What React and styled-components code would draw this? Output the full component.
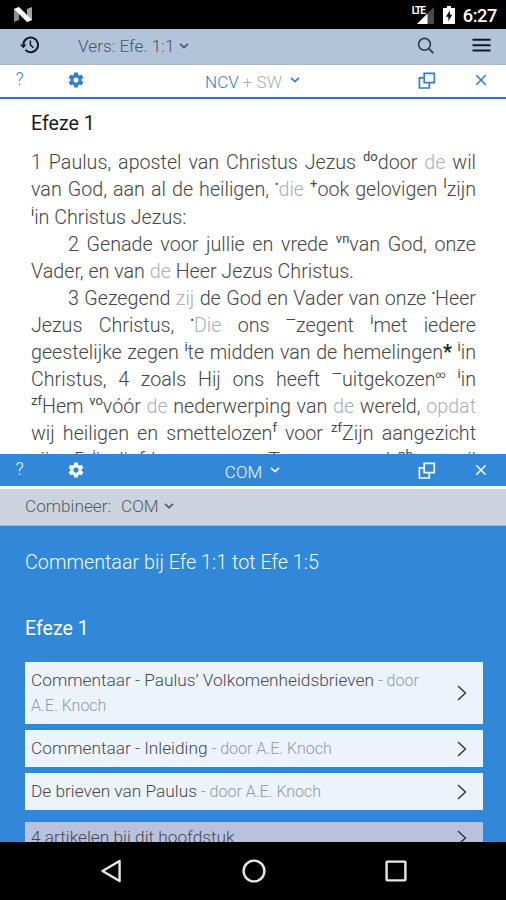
import * as React from 'react';
import styled, { createGlobalStyle, css } from 'styled-components';

const GlobalStyle = createGlobalStyle`
  * {
    box-sizing: border-box;
  }
  body {
    margin: 0;
    background: #000;
    font-family: Roboto, 'Open Sans', sans-serif;
    font-weight: 300;
  }
`;

// Icons
const NougatLogo = () => (
  <svg width='20' height='16' viewBox='0 0 20 16'>
    <path d='M1 2L6 0V13L1 15Z' fill='#8d8d8d' />
    <path d='M14 2L19 0V13L14 15Z' fill='#a5a5a5' />
    <path d='M1 2L6 0L19 13L14 15Z' fill='#fff' />
  </svg>
);

const SignalIcon = () => (
  <svg width='17' height='17' viewBox='0 0 17 17'>
    <path d='M17 0V17H0Z' fill='#4a4a4a' />
    <path d='M10.5 6.5V17H0Z' fill='#fff' />
  </svg>
);

const BatteryIcon = () => (
  <svg width='12' height='18' viewBox='0 0 12 18'>
    <path d='M4 0H8V2H12V18H0V2H4Z' fill='#fff' />
    <path d='M6.8 4.5L3 10.8H5.4V15.2L9.2 8.8H6.8Z' fill='#000' />
  </svg>
);

const HistoryIcon = () => (
  <svg width='20' height='18' viewBox='0 0 20 18' fill='none' stroke='#0c1a2b'>
    <path d='M3.4 8.6A7.3 7.3 0 1 1 5.4 13.9' strokeWidth='2' />
    <path d='M0 8.4H6.6L3.3 12.2Z' fill='#0c1a2b' stroke='none' />
    <path d='M10.4 4.6V9L13.4 11.6' strokeWidth='1.5' />
  </svg>
);

const SearchIcon = () => (
  <svg width='18' height='18' viewBox='0 0 18 18' fill='none' stroke='#2b3b4f'>
    <circle cx='7.5' cy='8.3' r='5.9' strokeWidth='1.6' />
    <path d='M11.8 12.6L16.3 17.1' strokeWidth='1.8' />
  </svg>
);

const MenuIcon = () => (
  <svg width='19' height='14' viewBox='0 0 19 14' stroke='#0c1a2b' strokeWidth='2'>
    <path d='M0.5 1.8H18.5M0.5 7.2H18.5M0.5 12.4H18.5' />
  </svg>
);

const GearIcon = () => (
  <svg width='18' height='18' viewBox='0 0 24 24' fill='currentColor'>
    <path d='M19.43 12.98c.04-.32.07-.64.07-.98s-.03-.66-.07-.98l2.11-1.65c.19-.15.24-.42.12-.64l-2-3.46c-.12-.22-.39-.3-.61-.22l-2.49 1c-.52-.4-1.08-.73-1.69-.98l-.38-2.65C14.46 2.18 14.25 2 14 2h-4c-.25 0-.46.18-.49.42l-.38 2.65c-.61.25-1.17.59-1.69.98l-2.49-1c-.23-.09-.49 0-.61.22l-2 3.46c-.13.22-.07.49.12.64l2.11 1.65c-.04.32-.07.65-.07.98s.03.66.07.98l-2.11 1.65c-.19.15-.24.42-.12.64l2 3.46c.12.22.39.3.61.22l2.49-1c.52.4 1.08.73 1.69.98l.38 2.65c.03.24.24.42.49.42h4c.25 0 .46-.18.49-.42l.38-2.65c.61-.25 1.17-.59 1.69-.98l2.49 1c.23.09.49 0 .61-.22l2-3.46c.12-.22.07-.49-.12-.64l-2.11-1.65zM12 15.5c-1.93 0-3.5-1.57-3.5-3.5s1.57-3.5 3.5-3.5 3.5 1.57 3.5 3.5-1.57 3.5-3.5 3.5z' />
  </svg>
);

const WindowsIcon = () => (
  <svg width='18' height='17' viewBox='0 0 18 17' fill='none' stroke='currentColor' strokeWidth='1.7'>
    <path d='M6.2 1.4H16.3V10.6H6.2Z' />
    <path d='M6.2 5.9H1.4V16H11.3V10.6' />
  </svg>
);

const CloseIcon = () => (
  <svg width='12' height='12' viewBox='0 0 12 12' stroke='currentColor' strokeWidth='1.6'>
    <path d='M1.3 1.3L10.7 10.7M10.7 1.3L1.3 10.7' />
  </svg>
);

const ChevronDown = () => (
  <svg width='10' height='8' viewBox='0 0 10 8' fill='none' stroke='currentColor' strokeWidth='1.7'>
    <path d='M1 1.8L5 5.6L9 1.8' />
  </svg>
);

const ChevronRight = () => (
  <svg width='10' height='16' viewBox='0 0 10 16' fill='none' stroke='#333b45' strokeWidth='1.5'>
    <path d='M1 1L8.4 8L1 15' />
  </svg>
);

function Sup({ children, small }) {
  return <SSup $small={small}>{children}</SSup>;
}

function Soft({ children }) {
  return <SSoft>{children}</SSoft>;
}

function Star({ children }) {
  return <SStar>{children}</SStar>;
}

// Every verse line is set separately, so that it breaks at the same words
const verses = [
  { body: <>1 Paulus, apostel van Christus Jezus <Sup>do</Sup>door <Soft>de</Soft> wil</> },
  { body: <>van God, aan al de heiligen, <Sup small>•</Sup><Soft>die</Soft> <Sup>+</Sup>ook gelovigen <Sup>l</Sup>zijn</> },
  { body: <><Sup>i</Sup>in Christus Jezus:</>, end: true },
  { body: <>2 Genade voor jullie en vrede <Sup>vn</Sup>van God, onze</>, indent: true },
  { body: <>Vader, en van <Soft>de</Soft> Heer Jezus Christus.</>, end: true },
  { body: <>3 Gezegend <Soft>zij</Soft> de God en Vader van onze <Sup small>•</Sup>Heer</>, indent: true },
  { body: <>Jezus Christus, <Sup small>•</Sup><Soft>Die</Soft> ons <Sup>—</Sup>zegent <Sup>i</Sup>met iedere</> },
  { body: <>geestelijke zegen <Sup>i</Sup>te midden van de hemelingen<Star>*</Star> <Sup>i</Sup>in</> },
  { body: <>Christus, 4 zoals Hij ons heeft <Sup>—</Sup>uitgekozen<Sup small>∞</Sup> <Sup>i</Sup>in</> },
  { body: <><Sup>zf</Sup>Hem <Sup>vo</Sup>vóór <Soft>de</Soft> nederwerping van <Soft>de</Soft> wereld, <Soft>opdat</Soft></> },
  { body: <>wij heiligen en smettelozen<Sup>f</Sup> voor <Sup>zf</Sup>Zijn aangezicht</> },
  { body: <>zijn. 5 <Sup>i</Sup>in liefde, waar ons Tevoren nu al <Sup>nb</Sup>een wil</> },
];

const articles = [
  { title: 'Commentaar - Paulus’ Volkomenheidsbrieven', author: 'A.E. Knoch' },
  { title: 'Commentaar - Inleiding', author: 'A.E. Knoch' },
  { title: 'De brieven van Paulus', author: 'A.E. Knoch' },
];

const PaneHeader = ({ filled, children }) => (
  <SPaneHeader $filled={filled}>
    <SHelp>?</SHelp>
    <GearIcon />
    <SPaneTitle>
      {children}
      <ChevronDown />
    </SPaneTitle>
    <WindowsIcon />
    <CloseIcon />
  </SPaneHeader>
);

export default function App() {
  return (
    <>
      <GlobalStyle />
      <SScreen>
        <SStatusBar>
          <NougatLogo />
          <SStatusIcons>
            <SLte>LTE</SLte>
            <SignalIcon />
            <BatteryIcon />
            <SClock>6:27</SClock>
          </SStatusIcons>
        </SStatusBar>

        <SToolbar>
          <HistoryIcon />
          <SVerse>
            Vers: Efe. 1:1
            <ChevronDown />
          </SVerse>
          <SearchIcon />
          <MenuIcon />
        </SToolbar>

        <PaneHeader>
          <span>
            NCV <SMuted>+ SW</SMuted>
          </span>
        </PaneHeader>
        <SReader>
          <SChapter>Efeze 1</SChapter>
          {verses.map((line, i) => (
            <SLine key={i} $indent={line.indent} $end={line.end}>
              {line.body}
            </SLine>
          ))}
        </SReader>

        <PaneHeader filled>
          <span>COM</span>
        </PaneHeader>
        <SCombine>
          <span>Combineer:</span>
          <SCombineValue>
            COM
            <ChevronDown />
          </SCombineValue>
        </SCombine>
        <SComments>
          <SCommentTitle>Commentaar bij Efe 1:1 tot Efe 1:5</SCommentTitle>
          <SCommentChapter>Efeze 1</SCommentChapter>
          <SCards>
            {articles.map(({ title, author }) => (
              <SCard key={title}>
                <SCardText>
                  {title} <SAuthor>- door {author}</SAuthor>
                </SCardText>
                <ChevronRight />
              </SCard>
            ))}
          </SCards>
          <SMoreCard>
            <SCardText>4 artikelen bij dit hoofdstuk</SCardText>
            <ChevronRight />
          </SMoreCard>
        </SComments>

        <SNavBar>
          <svg width='22' height='24' viewBox='0 0 22 24' fill='none' stroke='#e8e8e8' strokeWidth='2.4'>
            <path d='M19.6 2V22L2.5 12Z' strokeLinejoin='round' />
          </svg>
          <svg width='26' height='26' viewBox='0 0 26 26' fill='none' stroke='#e8e8e8' strokeWidth='2.4'>
            <circle cx='13' cy='13' r='10.4' />
          </svg>
          <svg width='22' height='22' viewBox='0 0 22 22' fill='none' stroke='#e8e8e8' strokeWidth='2.4'>
            <rect x='1.6' y='1.6' width='18.8' height='18.8' rx='0.6' />
          </svg>
        </SNavBar>
      </SScreen>
    </>
  );
}

const SScreen = styled.div`
  display: flex;
  flex-direction: column;
  width: 506px;
  height: 900px;
  overflow: hidden;
  background: #fff;
`;

const SStatusBar = styled.div`
  display: flex;
  flex: none;
  align-items: center;
  justify-content: space-between;
  height: 29px;
  padding: 1px 9px 0 13px;
  background: #000;
`;

const SStatusIcons = styled.div`
  display: flex;
  align-items: center;
  height: 100%;

  svg + svg {
    margin-left: 9px;
  }
`;

const SLte = styled.span`
  align-self: flex-start;
  z-index: 1;
  margin: 4px -8px 0 0;
  font-size: 10px;
  font-weight: 700;
  line-height: 11px;
  letter-spacing: -1px;
  color: #fff;
`;

const SClock = styled.span`
  margin-left: 8px;
  padding-top: 1px;
  font-size: 18.2px;
  font-weight: 500;
  line-height: 28px;
  letter-spacing: -0.4px;
  color: #fff;
`;

const SToolbar = styled.div`
  display: flex;
  flex: none;
  align-items: center;
  height: 36px;
  padding: 0 15px 3px 20px;
  background: #b1c4da;
  border-bottom: 1px solid #a9b8ca;
`;

const SVerse = styled.div`
  display: flex;
  flex: 1;
  align-items: center;
  gap: 5px;
  margin-left: 38px;
  padding-top: 2px;
  font-size: 17.2px;
  color: #4a5668;

  & ~ svg:last-child {
    margin-left: 37px;
  }
`;

const SPaneHeader = styled.div`
  display: grid;
  flex: none;
  grid-template-columns: 39px 74px 279px 69px 40px;
  align-items: center;
  justify-items: center;
  height: 34px;
  padding-bottom: 2px;
  color: #2f7fd3;
  background: #fff;
  border-bottom: 2px solid #2c78c8;

  ${({ $filled }) =>
    $filled &&
    css`
      height: 35px;
      padding-bottom: 0;
      color: #f1f7fd;
      background: #3187d8;
      border-bottom: 3px solid #f4fafe;
    `}
`;

const SHelp = styled.span`
  padding-bottom: 3px;
  font-size: 18px;
`;

const SPaneTitle = styled.div`
  display: flex;
  align-items: center;
  gap: 8px;
  font-size: 17px;

  span {
    padding-top: 3px;
  }
`;

const SMuted = styled.span`
  color: #a9afb6;
`;

const SReader = styled.div`
  flex: none;
  height: 355px;
  padding: 12px 30px 0 31px;
  overflow: hidden;
  font-size: 19.7px;
  color: #454545;
`;

const SChapter = styled.h2`
  margin: 0 0 12.4px;
  font-size: 19.6px;
  font-weight: 400;
  line-height: 26px;
  color: #1c1c1c;
`;

const SLine = styled.p`
  margin: 0;
  padding-left: ${({ $indent }) => ($indent ? '37px' : '0')};
  line-height: 27.1px;
  text-align: justify;
  text-align-last: ${({ $end }) => ($end ? 'left' : 'justify')};
  white-space: nowrap;
`;

const SSup = styled.sup`
  font-size: ${({ $small }) => ($small ? '10px' : '13px')};
  font-weight: 400;
  line-height: 0;
  vertical-align: 8px;
`;

const SStar = styled.span`
  font-weight: 700;
  color: #222;
`;

const SSoft = styled.span`
  color: #a9b0b8;
`;

const SCombine = styled.div`
  display: flex;
  flex: none;
  align-items: center;
  gap: 10px;
  height: 37px;
  padding: 0 25px 2px;
  font-size: 17.2px;
  color: #555b63;
  background: #cbd3de;
  border-bottom: 1px solid #a4b7cb;
`;

const SCombineValue = styled.div`
  display: flex;
  align-items: center;
  gap: 5px;
`;

const SComments = styled.div`
  flex: 1;
  min-height: 0;
  padding: 24px 23px 0 25px;
  overflow: hidden;
  background: #3187d8;
`;

const SCommentTitle = styled.h1`
  margin: 0;
  font-size: 19.75px;
  font-weight: 300;
  line-height: 26px;
  color: #f4f9ff;
`;

const SCommentChapter = styled.h2`
  margin: 40px 0 20px;
  font-size: 19.6px;
  font-weight: 400;
  line-height: 26px;
  color: #fff;
`;

const SCards = styled.div`
  display: flex;
  flex-direction: column;
  gap: 6px;
`;

const SCard = styled.div`
  display: flex;
  align-items: center;
  justify-content: space-between;
  padding: 6px 16px 6px 6px;
  background: #edf3fa;
`;

const SMoreCard = styled(SCard)`
  margin-top: 12px;
  padding-top: 3px;
  background: #b9c2dc;
`;

const SCardText = styled.div`
  width: 400px;
  font-size: 17.27px;
  line-height: 25px;
  color: #444a51;
`;

const SAuthor = styled.span`
  font-size: 16px;
  color: #8d99a5;
`;

const SNavBar = styled.div`
  display: flex;
  flex: none;
  align-items: center;
  justify-content: space-between;
  height: 58px;
  padding: 0 99px 0 100px;
  background: #000;
`;
